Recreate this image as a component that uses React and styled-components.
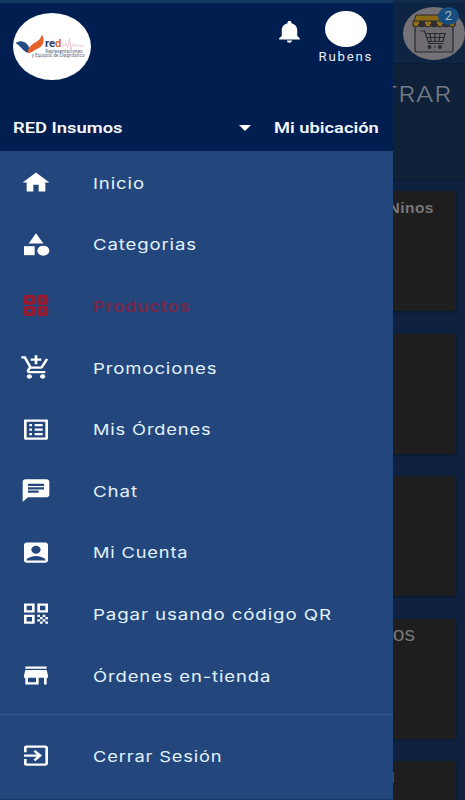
import React from "react";
import styled, { createGlobalStyle } from "styled-components";
import {
  MdAccountBox,
  MdAddShoppingCart,
  MdCategory,
  MdChat,
  MdExitToApp,
  MdHome,
  MdListAlt,
  MdNotifications,
  MdQrCode,
} from "react-icons/md";

function GridIcon(props) {
  return (
    <svg viewBox="0 0 24 24" fill="none" stroke="currentColor" {...props}>
      <rect x="4.4" y="4" width="5.4" height="5.8" rx="0.8" />
      <rect x="14.2" y="4" width="5.4" height="5.8" rx="0.8" />
      <rect x="4.4" y="14" width="5.4" height="5.8" rx="0.8" />
      <rect x="14.2" y="14" width="5.4" height="5.8" rx="0.8" />
    </svg>
  );
}

function StoreIcon(props) {
  return (
    <svg viewBox="0 0 24 24" fill="currentColor" {...props}>
      <path d="M20 4H4v2h16V4zm1 10v-2l-1-5H4l-1 5v2h1v6h10v-6h4v6h2v-6h1v0zm-9 4H6v-4h6v4z" />
    </svg>
  );
}

const items = [
  { label: "Inicio", icon: MdHome, width: 52 },
  { label: "Categorias", icon: MdCategory, width: 104 },
  { label: "Productos", icon: GridIcon, width: 98, active: true },
  { label: "Promociones", icon: MdAddShoppingCart, width: 125 },
  { label: "Mis Órdenes", icon: MdListAlt, width: 118 },
  { label: "Chat", icon: MdChat, width: 45 },
  { label: "Mi Cuenta", icon: MdAccountBox, width: 96 },
  { label: "Pagar usando código QR", icon: MdQrCode, width: 238.5 },
  { label: "Órdenes en-tienda", icon: StoreIcon, width: 178.5 },
];

const cards = [
  { title: "Ninos", size: 15.5, inset: 22 },
  {},
  {},
  { title: "os", size: 21, inset: 41 },
  { title: "l", size: 15, inset: 61 },
];

function Logo() {
  return (
    <svg width="78" height="67" viewBox="0 0 78 67">
      <path d="M2.5 30 C9 26.5 13 29 16 34 L18 38 L16 40 C10 39 8 33 2.5 30Z" fill="#244d83" />
      <path
        d="M15 40 C15 34 18 32 23 29 C27 27 28 24 29 21.5 C33 29 29 34 24 36 C21 37 19 40 15 40Z"
        fill="#e66129"
      />
      <text x="32" y="34.3" fontSize="10" fontWeight="700" textLength="16.5" lengthAdjust="spacingAndGlyphs">
        <tspan fill="#203e70">re</tspan>
        <tspan fill="#e5632e">d</tspan>
      </text>
      <path
        d="M49 32.5h3l1-2 1.5 4 2-9 1.5 11 1.5-5 2 1.5 1.5-2 1.5 2h6"
        fill="none"
        stroke="#f0bdc6"
        strokeWidth="0.9"
      />
      <text x="32.3" y="39.6" fontSize="4.6" textLength="37" lengthAdjust="spacingAndGlyphs" fill="#606a86">
        Representaciones
      </text>
      <text x="18.7" y="44.4" fontSize="4.6" textLength="53" lengthAdjust="spacingAndGlyphs" fill="#606a86">
        y Equipos de Diagnóstico
      </text>
    </svg>
  );
}

function StoreCart() {
  return (
    <svg width="62" height="53" viewBox="0 0 62 53">
      <rect x="12" y="17" width="38" height="28" rx="2" fill="#6d6b70" stroke="#292b32" strokeWidth="1.2" />
      <path d="M13 8h36l3 9v2H10v-2z" fill="#8c6b16" stroke="#29272a" strokeWidth="1" />
      <path
        d="M10 14h42v3a3 3 0 0 1-6 0 3 3 0 0 1-6 0 3 3 0 0 1-6 0 3 3 0 0 1-6 0 3 3 0 0 1-6 0 3 3 0 0 1-6 0 3 3 0 0 1-6 0z"
        fill="#927019"
        stroke="#26262b"
        strokeWidth="1"
      />
      <path
        d="M16 14h6v3a3 3 0 0 1-6 0zM28 14h6v3a3 3 0 0 1-6 0zM40 14h6v3a3 3 0 0 1-6 0z"
        fill="#312e30"
      />
      <path
        d="M17.5 24h4l4.5 12.5h14.5M22 26.5h20l-2 8H25M27 26.5l1 8M32 26.5v8M37 26.5l-1 8M23 30.5h18"
        fill="none"
        stroke="#292b31"
        strokeWidth="1.2"
      />
      <circle cx="26.5" cy="40" r="1.9" fill="#292b31" />
      <circle cx="37" cy="40" r="1.9" fill="#292b31" />
      <path d="M31 40h2" stroke="#292b31" />
    </svg>
  );
}

function MenuItem({ item }) {
  const Icon = item.icon;
  return (
    <Item $active={item.active}>
      <Icon preserveAspectRatio="none" />
      <Label text={item.label} width={item.width} />
    </Item>
  );
}

function Label({ text, width }) {
  const ref = React.useRef(null);
  React.useLayoutEffect(() => {
    const el = ref.current;
    el.style.transform = `scaleX(${width / el.offsetWidth})`;
  }, [text, width]);
  return <LabelText ref={ref}>{text}</LabelText>;
}

function App() {
  return (
    <Screen>
      <GlobalStyle />
      <Page>
        <TopBar>
          <CartButton>
            <StoreCart />
            <Badge>2</Badge>
          </CartButton>
        </TopBar>
        <PageTitle>
          <span>TRAR</span>
        </PageTitle>
        <Cards>
          {cards.map((card, i) => (
            <Card key={i} $size={card.size} $inset={card.inset}>
              {card.title}
            </Card>
          ))}
        </Cards>
      </Page>
      <Drawer>
        <Header>
          <Profile>
            <LogoCircle>
              <Logo />
            </LogoCircle>
            <Bell preserveAspectRatio="none" />
            <User>
              <Avatar />
              <Name>Rubens</Name>
            </User>
          </Profile>
          <Location>
            <Label text="RED Insumos" width={109} />
            <Caret />
            <Label text="Mi ubicación" width={105} />
          </Location>
        </Header>
        <Menu>
          {items.map((item) => (
            <MenuItem key={item.label} item={item} />
          ))}
        </Menu>
        <Footer>
          <MenuItem item={{ label: "Cerrar Sesión", icon: MdExitToApp, width: 129 }} />
        </Footer>
      </Drawer>
    </Screen>
  );
}

export default App;

const GlobalStyle = createGlobalStyle`
  body {
    margin: 0;
    background: #0e2240;
    font-family: Roboto, "Liberation Sans", sans-serif;
  }
  * {
    box-sizing: border-box;
  }
`;

const Screen = styled.div`
  position: relative;
  width: 465px;
  height: 800px;
  overflow: hidden;
`;

const Page = styled.div`
  height: 100%;
  display: flex;
  flex-direction: column;
  background: #0e2240;
`;

const TopBar = styled.div`
  height: 64px;
  flex-shrink: 0;
  display: flex;
  justify-content: flex-end;
  padding-top: 4px;
  background: #0e2443;
  border-top: 3px solid #112b4a;
  border-bottom: 1px solid #0b1c35;
`;

const CartButton = styled.div`
  position: relative;
  width: 62px;
  height: 53px;
  border-radius: 50%;
  background: #747277;
`;

const Badge = styled.div`
  position: absolute;
  top: 0;
  left: 35px;
  width: 21px;
  height: 18px;
  border-radius: 50%;
  background: #174e7f;
  color: #a9b8c9;
  font-size: 13px;
  line-height: 18px;
  text-align: center;
`;

const PageTitle = styled.div`
  height: 116px;
  flex-shrink: 0;
  display: flex;
  justify-content: flex-end;
  padding: 14px 13px 0 0;
  background: #0f2139;
  border-bottom: 1px solid #0a1a32;
  color: #737a86;
  font-family: Inter, sans-serif;
  font-size: 22px;
  font-weight: 300;
  line-height: 32px;
  span {
    letter-spacing: 0.5px;
    transform: scaleX(1.21);
    transform-origin: right;
  }
`;

const Cards = styled.div`
  display: flex;
  flex-direction: column;
  gap: 22.5px;
  padding: 11px 9px 0 0;
`;

const Card = styled.div`
  height: 120px;
  flex-shrink: 0;
  padding: ${(p) => (p.$size > 16 ? 5 : 7)}px ${(p) => p.$inset || 0}px 0 0;
  border-radius: 2px;
  background: #1e1e1e;
  box-shadow: 0 1px 3px #0a1628;
  color: #77777a;
  font-family: "Liberation Sans", sans-serif;
  font-size: ${(p) => p.$size || 15}px;
  font-weight: ${(p) => (p.$size > 16 ? 400 : 700)};
  line-height: 20px;
  letter-spacing: ${(p) => (p.$size > 16 ? 0 : 0.5)}px;
  text-align: right;
`;

const Drawer = styled.div`
  position: absolute;
  top: 0;
  left: 0;
  width: 392.5px;
  height: 800px;
  display: flex;
  flex-direction: column;
  background: #23477d;
  border-bottom: 1px solid #183765;
`;

const Header = styled.div`
  height: 151px;
  flex-shrink: 0;
  border-top: 3px solid #143a63;
  background: #001f50;
`;

const Profile = styled.div`
  height: 100px;
  display: flex;
  align-items: flex-start;
  padding: 8px 17px 0 13px;
`;

const LogoCircle = styled.div`
  width: 78px;
  height: 67px;
  margin-top: 2px;
  border-radius: 50%;
  background: #fff;
  overflow: hidden;
`;

const Bell = styled(MdNotifications)`
  width: 31px;
  height: 27px;
  margin: 7px 11px 0 auto;
  color: #fff;
`;

const User = styled.div`
  width: 60px;
  display: flex;
  flex-direction: column;
  align-items: center;
`;

const Avatar = styled.div`
  width: 42px;
  height: 36px;
  border-radius: 50%;
  background: #fff;
`;

const Name = styled.div`
  margin-top: 3px;
  color: #e8edf6;
  font-size: 12px;
  line-height: 14px;
  letter-spacing: 1.6px;
  transform: scaleX(1.1);
`;

const LabelText = styled.span`
  transform-origin: left;
  white-space: nowrap;
`;

const Location = styled.div`
  height: 49px;
  display: grid;
  grid-template-columns: 226px 35px 1fr;
  justify-items: start;
  align-items: center;
  padding-left: 13px;
  color: #f4f7fc;
  font-size: 15.5px;
  font-weight: 600;
`;

const Caret = styled.div`
  border: 6.5px solid transparent;
  border-top: 6px solid #fff;
  border-bottom: 0;
`;

const Menu = styled.div`
  height: 563px;
  flex-shrink: 0;
  padding-top: 1px;
`;

const Item = styled.div`
  height: 61.6px;
  display: flex;
  align-items: center;
  padding-left: 20px;
  color: ${(p) => (p.$active ? "#7a2646" : "#e3f2fb")};
  font-family: Inter, sans-serif;
  font-size: 15px;
  font-weight: ${(p) => (p.$active ? 600 : 400)};
  letter-spacing: 0.7px;
  svg {
    width: 32px;
    height: 27px;
    margin-right: 41px;
    color: ${(p) => (p.$active ? "#941c30" : "#fff")};
    stroke-width: ${(p) => (p.$active ? 3.1 : 0)};
  }
  ${LabelText} {
    padding-top: 1px;
  }
`;

const Footer = styled.div`
  padding-top: 10px;
  border-top: 1px solid #365789;
`;
